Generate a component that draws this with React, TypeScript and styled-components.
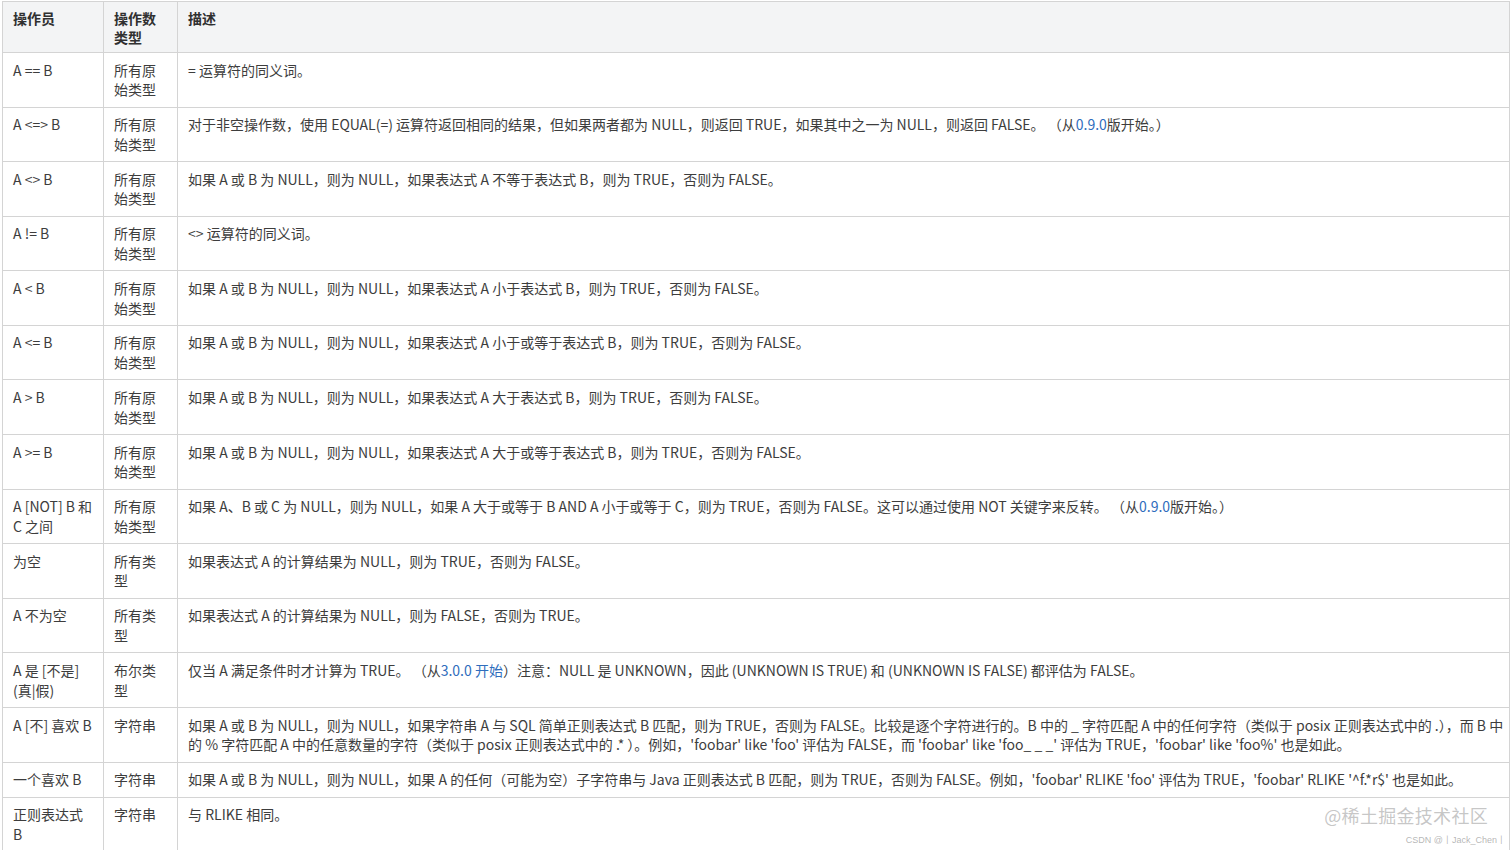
import React from "react";
import styled, { createGlobalStyle } from "styled-components";

const Global = createGlobalStyle`
  html, body { margin: 0; padding: 0; background: #fff; }
  body { font-family: "Noto Sans CJK SC", "Noto Sans", sans-serif; overflow: hidden; }
`;

const Page = styled.div`
  position: relative;
  width: 1512px;
  height: 850px;
  overflow: hidden;
  padding: 1px 0 0 2px;
  box-sizing: border-box;
`;

const Table = styled.table`
  border-collapse: collapse;
  width: 1508px;
  table-layout: fixed;
  font-size: 14px;
  line-height: 19.6px;
  color: #3d3d3d;
`;

const Th = styled.th<{ $w?: number }>`
  background: #f3f4f5;
  border: 1px solid #d4d4d4;
  padding: 7px 10px 5px 10px;
  line-height: 19px;
  text-align: left;
  vertical-align: top;
  font-weight: 700;
  color: #303030;
  width: ${(p) => (p.$w ? `${p.$w}px` : "auto")};
  box-sizing: border-box;
`;

const Td = styled.td<{ $wide?: boolean }>`
  border: 1px solid #d4d4d4;
  padding: 7.6px ${(p) => (p.$wide ? "4px" : "10px")} 6.8px 10px;
  vertical-align: top;
  text-align: left;
`;

const Link = styled.a`
  color: #2f6dbd;
  text-decoration: none;
`;

const Watermark = styled.div`
  position: absolute;
  right: 24px;
  bottom: 22px;
  font-size: 18px;
  color: rgba(150, 150, 150, 0.55);
  letter-spacing: 0.3px;
`;

const Credit = styled.div`
  position: absolute;
  right: 6px;
  bottom: 3px;
  font-size: 9px;
  color: rgba(150, 150, 150, 0.7);
  font-family: "Liberation Sans", sans-serif;
`;

type Row = { op: React.ReactNode; type: string; desc: React.ReactNode };

const rows: Row[] = [
  { op: "A == B", type: "所有原始类型", desc: "= 运算符的同义词。" },
  {
    op: "A <=> B",
    type: "所有原始类型",
    desc: (
      <>
        对于非空操作数，使用 EQUAL(=) 运算符返回相同的结果，但如果两者都为 NULL，则返回 TRUE，如果其中之一为 NULL，则返回 FALSE。 （从<Link>0.9.0</Link>版开始。）
      </>
    ),
  },
  { op: "A <> B", type: "所有原始类型", desc: "如果 A 或 B 为 NULL，则为 NULL，如果表达式 A 不等于表达式 B，则为 TRUE，否则为 FALSE。" },
  { op: "A != B", type: "所有原始类型", desc: "<> 运算符的同义词。" },
  { op: "A < B", type: "所有原始类型", desc: "如果 A 或 B 为 NULL，则为 NULL，如果表达式 A 小于表达式 B，则为 TRUE，否则为 FALSE。" },
  { op: "A <= B", type: "所有原始类型", desc: "如果 A 或 B 为 NULL，则为 NULL，如果表达式 A 小于或等于表达式 B，则为 TRUE，否则为 FALSE。" },
  { op: "A > B", type: "所有原始类型", desc: "如果 A 或 B 为 NULL，则为 NULL，如果表达式 A 大于表达式 B，则为 TRUE，否则为 FALSE。" },
  { op: "A >= B", type: "所有原始类型", desc: "如果 A 或 B 为 NULL，则为 NULL，如果表达式 A 大于或等于表达式 B，则为 TRUE，否则为 FALSE。" },
  {
    op: "A [NOT] B 和 C 之间",
    type: "所有原始类型",
    desc: (
      <>
        如果 A、B 或 C 为 NULL，则为 NULL，如果 A 大于或等于 B AND A 小于或等于 C，则为 TRUE，否则为 FALSE。这可以通过使用 NOT 关键字来反转。 （从<Link>0.9.0</Link>版开始。）
      </>
    ),
  },
  { op: "为空", type: "所有类型", desc: "如果表达式 A 的计算结果为 NULL，则为 TRUE，否则为 FALSE。" },
  { op: "A 不为空", type: "所有类型", desc: "如果表达式 A 的计算结果为 NULL，则为 FALSE，否则为 TRUE。" },
  {
    op: "A 是 [不是] (真|假)",
    type: "布尔类型",
    desc: (
      <>
        仅当 A 满足条件时才计算为 TRUE。 （从<Link>3.0.0 开始</Link>）注意：NULL 是 UNKNOWN，因此 (UNKNOWN IS TRUE) 和 (UNKNOWN IS FALSE) 都评估为 FALSE。
      </>
    ),
  },
  {
    op: "A [不] 喜欢 B",
    type: "字符串",
    desc: "如果 A 或 B 为 NULL，则为 NULL，如果字符串 A 与 SQL 简单正则表达式 B 匹配，则为 TRUE，否则为 FALSE。比较是逐个字符进行的。B 中的 _ 字符匹配 A 中的任何字符（类似于 posix 正则表达式中的 .），而 B 中的 % 字符匹配 A 中的任意数量的字符（类似于 posix 正则表达式中的 .* ）。例如，'foobar' like 'foo' 评估为 FALSE，而 'foobar' like 'foo_ _ _' 评估为 TRUE，'foobar' like 'foo%' 也是如此。",
  },
  {
    op: "一个喜欢 B",
    type: "字符串",
    desc: "如果 A 或 B 为 NULL，则为 NULL，如果 A 的任何（可能为空）子字符串与 Java 正则表达式 B 匹配，则为 TRUE，否则为 FALSE。例如，'foobar' RLIKE 'foo' 评估为 TRUE，'foobar' RLIKE '^f.*r$' 也是如此。",
  },
  { op: "正则表达式 B", type: "字符串", desc: "与 RLIKE 相同。" },
];

export default function App() {
  return (
    <>
      <Global />
      <Page>
        <Table>
          <thead>
            <tr>
              <Th $w={101}>操作员</Th>
              <Th $w={74}>操作数类型</Th>
              <Th>描述</Th>
            </tr>
          </thead>
          <tbody>
            {rows.map((r, i) => (
              <tr key={i}>
                <Td>{r.op}</Td>
                <Td>{r.type}</Td>
                <Td $wide>{r.desc}</Td>
              </tr>
            ))}
          </tbody>
        </Table>
        <Watermark>@稀土掘金技术社区</Watermark>
        <Credit>CSDN @丨Jack_Chen丨</Credit>
      </Page>
    </>
  );
}
